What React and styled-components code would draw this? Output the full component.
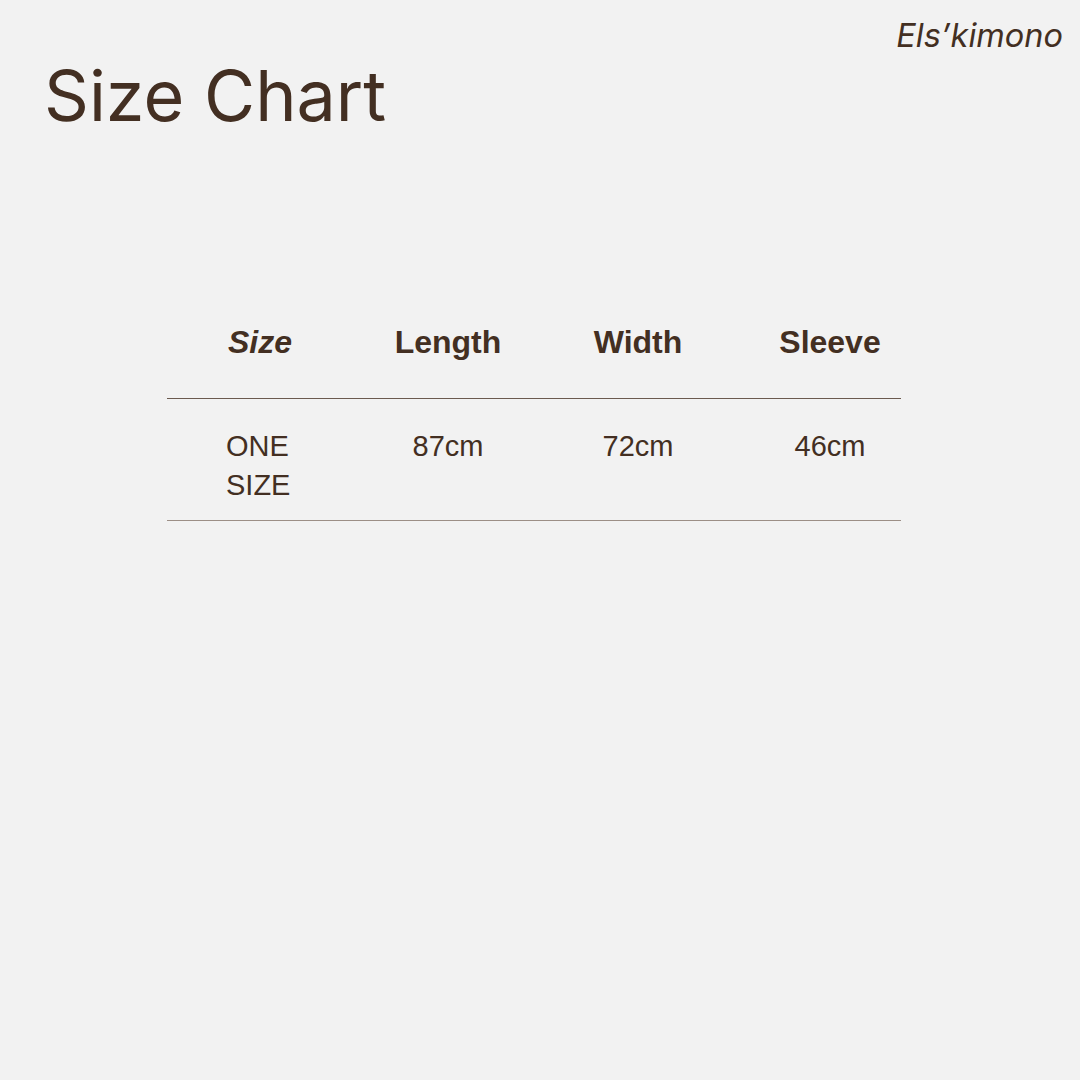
import React from "react";
import styled, { createGlobalStyle } from "styled-components";

const GlobalStyle = createGlobalStyle`
  html, body {
    margin: 0;
    padding: 0;
    background: #f2f2f2;
  }
  body {
    font-family: "Liberation Sans", Arial, sans-serif;
    color: #432f22;
  }
`;

const Page = styled.div`
  width: 1080px;
  height: 1080px;
  display: flex;
  flex-direction: column;
  background: #f2f2f2;
`;

const Brand = styled.div`
  align-self: flex-end;
  margin: 16px 17px 0 0;
  font-family: Inter, "Liberation Sans", sans-serif;
  font-style: italic;
  font-size: 32.5px;
  line-height: 40px;
  color: #432f22;
`;

const Title = styled.h1`
  margin: 5px 0 0 44px;
  font-family: Inter, "Liberation Sans", sans-serif;
  font-weight: 400;
  font-size: 70px;
  line-height: 70px;
  letter-spacing: 0;
  color: #432f22;
`;

const Table = styled.div`
  margin: 191px 0 0 167px;
  width: 734px;
  display: grid;
  grid-template-columns: 186px 190px 190px 168px;
`;

const HeadCell = styled.div`
  text-align: center;
  padding-left: ${p => p.shift || 0}px;
  font-size: 32px;
  font-weight: 700;
  font-style: ${p => (p.italic ? "italic" : "normal")};
  line-height: 40px;
  padding-bottom: 36px;
  border-bottom: 1px solid #6b5a4f;
  color: #432f22;
`;

const Cell = styled.div`
  text-align: ${p => (p.left ? "left" : "center")};
  padding-left: ${p => p.shift || 0}px;
  font-size: 29px;
  line-height: 39px;
  padding-top: 28px;
  padding-bottom: 15px;
  border-bottom: 1px solid #9c8f86;
  color: #432f22;
`;

const columns = [
  { head: "Size", italic: true, value: "ONE\nSIZE" },
  { head: "Length", value: "87cm" },
  { head: "Width", value: "72cm" },
  { head: "Sleeve", value: "46cm", shift: 26 },
];

export default function App() {
  return (
    <>
      <GlobalStyle />
      <Page>
        <Brand>Els’kimono</Brand>
        <Title>Size Chart</Title>
        <Table>
          {columns.map(c => (
            <HeadCell key={c.head} italic={c.italic} shift={c.shift}>
              {c.head}
            </HeadCell>
          ))}
          {columns.map(c => (
            <Cell key={c.head} shift={c.shift || (c.italic ? 59 : 0)} left={c.italic}>
              {c.value.split("\n").map(line => (
                <div key={line}>{line}</div>
              ))}
            </Cell>
          ))}
        </Table>
      </Page>
    </>
  );
}
